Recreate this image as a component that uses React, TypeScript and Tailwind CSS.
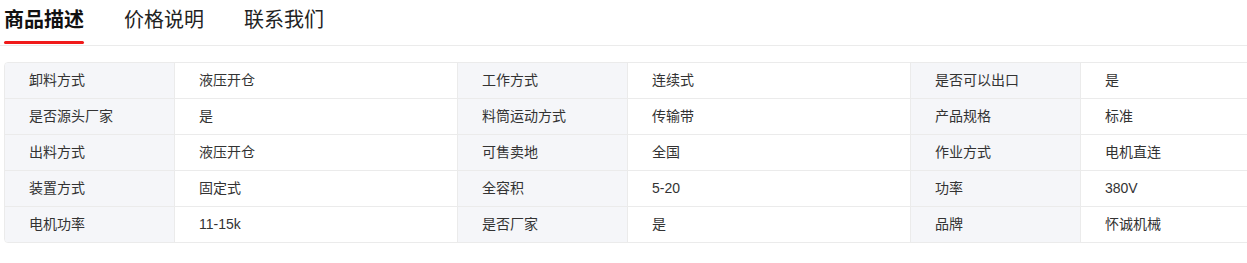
import React from "react";

const rows: string[][] = [
  ["卸料方式", "液压开仓", "工作方式", "连续式", "是否可以出口", "是"],
  ["是否源头厂家", "是", "料筒运动方式", "传输带", "产品规格", "标准"],
  ["出料方式", "液压开仓", "可售卖地", "全国", "作业方式", "电机直连"],
  ["装置方式", "固定式", "全容积", "5-20", "功率", "380V"],
  ["电机功率", "11-15k", "是否厂家", "是", "品牌", "怀诚机械"],
];

export default function App() {
  return (
    <div
      className="w-[1247px] h-[263px] overflow-hidden bg-white text-[#333]"
      style={{ fontFamily: '"Liberation Sans", "Noto Sans CJK SC", sans-serif' }}
    >
      <div className="flex items-start gap-10 pl-[4px] h-[46px] border-b border-[#ebebeb]">
        <div className="flex flex-col items-stretch">
          <span className="text-[20px] leading-[40px] font-bold text-[#111]">商品描述</span>
          <span className="h-[3px] rounded-full bg-[#f01a1a] mt-[1px]" />
        </div>
        <span className="text-[20px] leading-[40px] text-[#222]">价格说明</span>
        <span className="text-[20px] leading-[40px] text-[#222]">联系我们</span>
      </div>
      <div className="pl-[4px] pt-[16px]">
        <div className="w-[1360px] border border-[#ebebeb] rounded-[4px] overflow-hidden">
          {rows.map((r, i) => (
            <div
              key={i}
              className={
                "grid grid-cols-[170px_283px_170px_283px_170px_283px] text-[14px] " +
                (i < rows.length - 1 ? "h-[36px] border-b border-[#ebebeb]" : "h-[35px]")
              }
            >
              {r.map((c, j) => (
                <div
                  key={j}
                  className={
                    j % 2 === 0
                      ? "bg-[#f5f6f9] pl-[24px] flex items-center border-r border-[#ebebeb]"
                      : "bg-white pl-[24px] flex items-center border-r border-[#ebebeb]"
                  }
                >
                  {c}
                </div>
              ))}
            </div>
          ))}
        </div>
      </div>
    </div>
  );
}
